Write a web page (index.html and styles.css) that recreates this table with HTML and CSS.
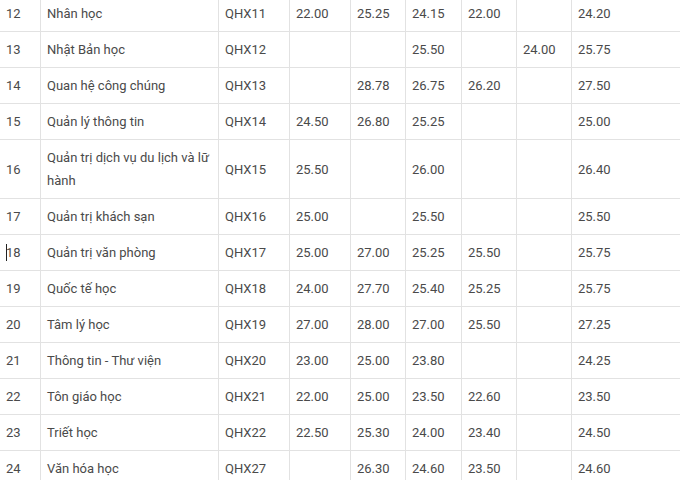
FILE: index.html
```html
<!DOCTYPE html>
<html>
<head>
<meta charset="utf-8">
<link rel="stylesheet" href="styles.css">
</head>
<body>
<table class="scores">
<colgroup>
<col class="c-no"><col class="c-name"><col class="c-code"><col class="c-s"><col class="c-s2"><col class="c-s3"><col class="c-s4"><col class="c-s4"><col class="c-last">
</colgroup>
<tbody>
<tr><td>12</td><td>Nhân học</td><td>QHX11</td><td>22.00</td><td>25.25</td><td>24.15</td><td>22.00</td><td></td><td>24.20</td></tr>
<tr><td>13</td><td>Nhật Bản học</td><td>QHX12</td><td></td><td></td><td>25.50</td><td></td><td>24.00</td><td>25.75</td></tr>
<tr><td>14</td><td>Quan hệ công chúng</td><td>QHX13</td><td></td><td>28.78</td><td>26.75</td><td>26.20</td><td></td><td>27.50</td></tr>
<tr><td>15</td><td>Quản lý thông tin</td><td>QHX14</td><td>24.50</td><td>26.80</td><td>25.25</td><td></td><td></td><td>25.00</td></tr>
<tr><td>16</td><td>Quản trị dịch vụ du lịch và lữ hành</td><td>QHX15</td><td>25.50</td><td></td><td>26.00</td><td></td><td></td><td>26.40</td></tr>
<tr><td>17</td><td>Quản trị khách sạn</td><td>QHX16</td><td>25.00</td><td></td><td>25.50</td><td></td><td></td><td>25.50</td></tr>
<tr><td><span class="caret"></span>18</td><td>Quản trị văn phòng</td><td>QHX17</td><td>25.00</td><td>27.00</td><td>25.25</td><td>25.50</td><td></td><td>25.75</td></tr>
<tr><td>19</td><td>Quốc tế học</td><td>QHX18</td><td>24.00</td><td>27.70</td><td>25.40</td><td>25.25</td><td></td><td>25.75</td></tr>
<tr><td>20</td><td>Tâm lý học</td><td>QHX19</td><td>27.00</td><td>28.00</td><td>27.00</td><td>25.50</td><td></td><td>27.25</td></tr>
<tr><td>21</td><td>Thông tin - Thư viện</td><td>QHX20</td><td>23.00</td><td>25.00</td><td>23.80</td><td></td><td></td><td>24.25</td></tr>
<tr><td>22</td><td>Tôn giáo học</td><td>QHX21</td><td>22.00</td><td>25.00</td><td>23.50</td><td>22.60</td><td></td><td>23.50</td></tr>
<tr><td>23</td><td>Triết học</td><td>QHX22</td><td>22.50</td><td>25.30</td><td>24.00</td><td>23.40</td><td></td><td>24.50</td></tr>
<tr><td>24</td><td>Văn hóa học</td><td>QHX27</td><td></td><td>26.30</td><td>24.60</td><td>23.50</td><td></td><td>24.60</td></tr>
</tbody>
</table>
</body>
</html>
```
FILE: styles.css
```css
html, body {
  margin: 0;
  padding: 0;
  background: #fff;
  overflow: hidden;
}
.scores {
  border-collapse: collapse;
  table-layout: fixed;
  width: 692px;
  margin: -5px 0 0 -1px;
  font-family: Roboto, "Noto Sans", sans-serif;
  font-size: 13px;
  color: #4a4a4a;
}
.scores td {
  border: 1px solid #e2e2e2;
  padding: 6px 6px 6px 6px;
  line-height: 23px;
  vertical-align: middle;
  text-align: left;
}
.c-no { width: 41px; }
.c-name { width: 178px; }
.c-code { width: 71px; }
.c-s { width: 61px; }
.c-s2 { width: 55px; }
.c-s3 { width: 56px; }
.c-s4 { width: 55px; }
.c-last { width: 120px; }
.caret {
  display: inline-block;
  width: 1px;
  height: 17px;
  background: #222;
  vertical-align: -4px;
  margin-right: -1px;
}
```
